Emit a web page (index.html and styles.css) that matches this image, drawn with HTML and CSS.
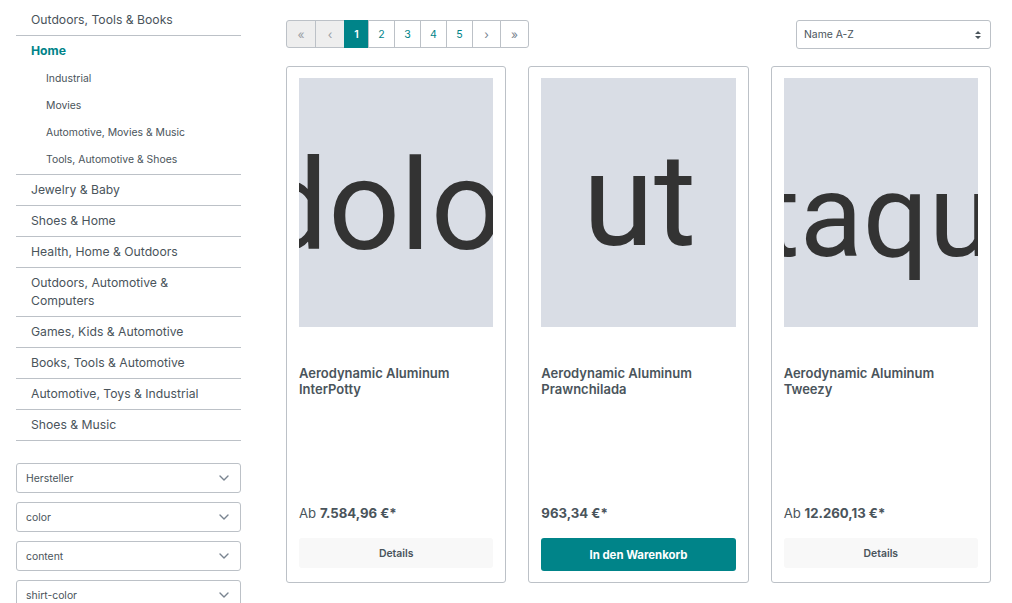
FILE: index.html
```html
<!DOCTYPE html>
<html lang="de">
<head>
<meta charset="utf-8">
<title>Home</title>
<link rel="stylesheet" href="styles.css">
</head>
<body>
<div class="page">
  <aside class="sidebar">
    <ul class="cats">
      <li class="cat"><a>Outdoors, Tools &amp; Books</a></li>
      <li class="cat">
        <a class="active">Home</a>
        <ul class="subcats">
          <li>Industrial</li>
          <li>Movies</li>
          <li>Automotive, Movies &amp; Music</li>
          <li>Tools, Automotive &amp; Shoes</li>
        </ul>
      </li>
      <li class="cat"><a>Jewelry &amp; Baby</a></li>
      <li class="cat"><a>Shoes &amp; Home</a></li>
      <li class="cat"><a>Health, Home &amp; Outdoors</a></li>
      <li class="cat"><a>Outdoors, Automotive &amp;<br>Computers</a></li>
      <li class="cat"><a>Games, Kids &amp; Automotive</a></li>
      <li class="cat"><a>Books, Tools &amp; Automotive</a></li>
      <li class="cat"><a>Automotive, Toys &amp; Industrial</a></li>
      <li class="cat"><a>Shoes &amp; Music</a></li>
    </ul>
    <div class="filters">
      <div class="filter"><span>Hersteller</span><svg class="chev" viewBox="0 0 10 6" width="10" height="6"><path d="M1 1l4 4 4-4" fill="none" stroke="#798490" stroke-width="1.4" stroke-linecap="round" stroke-linejoin="round"/></svg></div>
      <div class="filter"><span>color</span><svg class="chev" viewBox="0 0 10 6" width="10" height="6"><path d="M1 1l4 4 4-4" fill="none" stroke="#798490" stroke-width="1.4" stroke-linecap="round" stroke-linejoin="round"/></svg></div>
      <div class="filter"><span>content</span><svg class="chev" viewBox="0 0 10 6" width="10" height="6"><path d="M1 1l4 4 4-4" fill="none" stroke="#798490" stroke-width="1.4" stroke-linecap="round" stroke-linejoin="round"/></svg></div>
      <div class="filter"><span>shirt-color</span><svg class="chev" viewBox="0 0 10 6" width="10" height="6"><path d="M1 1l4 4 4-4" fill="none" stroke="#798490" stroke-width="1.4" stroke-linecap="round" stroke-linejoin="round"/></svg></div>
    </div>
  </aside>

  <main class="main">
    <div class="toolbar">
      <nav class="pagination">
        <span class="pg disabled">«</span>
        <span class="pg disabled">‹</span>
        <span class="pg current">1</span>
        <span class="pg num">2</span>
        <span class="pg num">3</span>
        <span class="pg num">4</span>
        <span class="pg num">5</span>
        <span class="pg arrow">›</span>
        <span class="pg arrow">»</span>
      </nav>
      <div class="sort">
        <span>Name A-Z</span>
        <svg class="updown" viewBox="0 0 8 10" width="8" height="10"><path d="M4 1L7 4H1z M4 9L1 6h6z" fill="#4a545b"/></svg>
      </div>
    </div>

    <div class="grid">
      <article class="card">
        <div class="thumb"><span class="word-a">dolor</span></div>
        <h3 class="title">Aerodynamic Aluminum InterPotty</h3>
        <div class="price">Ab <b>7.584,96 €*</b></div>
        <button class="btn btn-light">Details</button>
      </article>
      <article class="card">
        <div class="thumb"><span class="word-b">ut</span></div>
        <h3 class="title">Aerodynamic Aluminum Prawnchilada</h3>
        <div class="price"><b>963,34 €*</b></div>
        <button class="btn btn-primary">In den Warenkorb</button>
      </article>
      <article class="card">
        <div class="thumb"><span class="word-c">itaque</span></div>
        <h3 class="title">Aerodynamic Aluminum Tweezy</h3>
        <div class="price">Ab <b>12.260,13 €*</b></div>
        <button class="btn btn-light">Details</button>
      </article>
    </div>
  </main>
</div>
</body>
</html>
```

FILE: styles.css
```css
* { box-sizing: border-box; }
html, body { margin: 0; padding: 0; background: #fff; }
body {
  font-family: Inter, "Noto Sans", "Liberation Sans", sans-serif;
  color: #4a545b;
  font-size: 12.2px;
}
.page {
  display: flex;
  gap: 45px;
  padding: 5px 21px 0 16px;
  align-items: flex-start;
}
.sidebar { width: 225px; flex: none; }
.cats, .subcats { list-style: none; margin: 0; padding: 0; }
.cat { border-bottom: 1px solid #bcc1c7; }
.cat > a {
  display: block;
  padding: 6px 15px;
  line-height: 18px;
  font-size: 12.2px;
  color: #4a545b;
}
.cat > a.active { color: #008489; font-weight: 700; }
.subcats li {
  padding: 4px 0 5px 30px;
  line-height: 18px;
  font-size: 10.4px;
  color: #4a545b;
}
.filters {
  margin-top: 22px;
  display: flex;
  flex-direction: column;
  gap: 9px;
}
.filter {
  height: 30px;
  border: 1px solid #bcc1c7;
  border-radius: 3px;
  display: flex;
  align-items: center;
  justify-content: space-between;
  padding: 0 11px 0 9px;
  font-size: 10.4px;
  color: #4a545b;
}
.main { width: 705px; flex: none; padding-top: 15px; }
.toolbar {
  display: flex;
  justify-content: space-between;
  align-items: flex-start;
}
.pagination { display: flex; }
.pg {
  height: 28px;
  min-width: 24px;
  padding: 0 8px;
  border: 1px solid #bcc1c7;
  margin-left: -1px;
  display: flex;
  align-items: center;
  justify-content: center;
  font-size: 10.6px;
  color: #008489;
  background: #fff;
}
.pg:first-child { margin-left: 0; border-radius: 3px 0 0 3px; }
.pg:last-child { border-radius: 0 3px 3px 0; width: 31px; }
.pg.disabled { background: #eee; color: #9aa0a6; width: 30px; font-size: 12px; }
.pg.current { background: #008489; color: #fff; border-color: #008489; width: 25px; font-weight: 600; }
.pg.num { width: 27px; }
.pg.arrow { color: #798490; width: 29px; font-size: 12px; }
.sort {
  width: 195px;
  height: 29px;
  border: 1px solid #bcc1c7;
  border-radius: 3px;
  display: flex;
  align-items: center;
  justify-content: space-between;
  padding: 0 8px 0 7px;
  font-size: 10.4px;
  color: #4a545b;
}
.grid {
  margin-top: 17px;
  display: grid;
  grid-template-columns: repeat(3, minmax(0, 1fr));
  column-gap: 22px;
}
.card {
  min-width: 0;
  border: 1px solid #bcc1c7;
  border-radius: 3px;
  padding: 11px 12px 11px;
  display: flex;
  flex-direction: column;
}
.thumb {
  height: 249px;
  min-width: 0;
  background: #d9dde5;
  overflow: hidden;
  display: flex;
  align-items: center;
  justify-content: center;
}
.thumb span {
  font-family: Roboto, "Liberation Sans", sans-serif;
  color: #333;
  white-space: nowrap;
  line-height: 1;
  flex: none;
}
.thumb .word-a { font-size: 126px; margin: 6px 0 0 10px; }
.thumb .word-b { font-size: 129px; margin: -4px 0 0 2px; }
.thumb .word-c { font-size: 116px; margin: 26px 0 0 26px; }
.title {
  margin: 38px 0 0;
  height: 138px;
  font-size: 13px;
  line-height: 16px;
  font-weight: 600;
  color: #4a545b;
}
.price {
  font-size: 13.2px;
  line-height: 20px;
  color: #4a545b;
}
.price b { font-weight: 700; }
.btn {
  margin-top: 15px;
  border: 0;
  border-radius: 3px;
  font-family: inherit;
  width: 100%;
  display: block;
}
.btn-light {
  height: 30px;
  background: #f8f8f8;
  color: #4a545b;
  font-size: 10.4px;
  font-weight: 600;
}
.btn-primary {
  height: 33px;
  background: #008489;
  color: #fff;
  font-size: 11.4px;
  font-weight: 700;
}
```
